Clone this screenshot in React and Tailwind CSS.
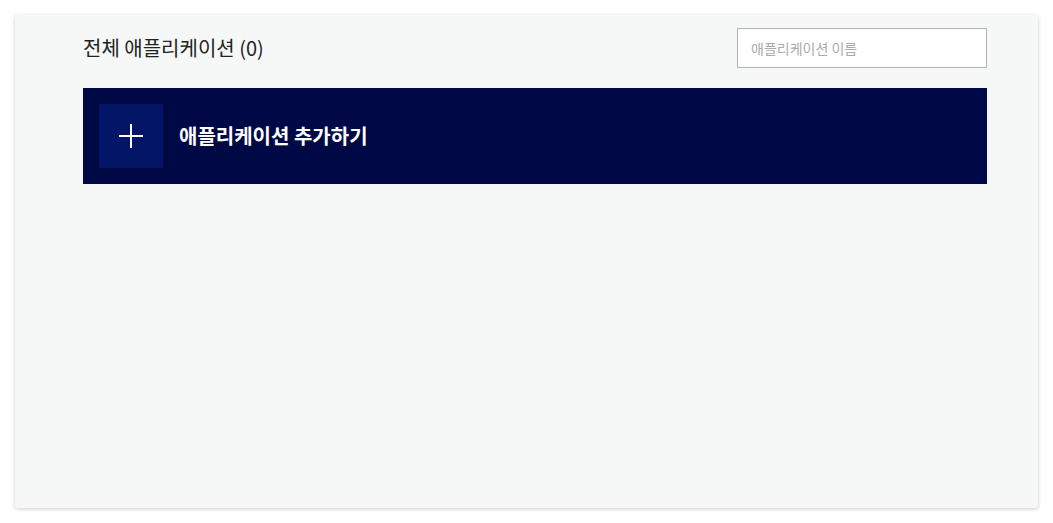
export default function App() {
  return (
    <div className="w-[1053px] h-[523px] bg-white pt-[15px] pl-[15px]" style={{ fontFamily: '"Noto Sans CJK KR", "Noto Sans", sans-serif' }}>
      <div className="w-[1023px] h-[493px] bg-[#f6f7f7] rounded-[3px] shadow-[0_1px_4px_rgba(0,0,0,0.2)] pl-[68px] pr-[51px] pt-[13px]">
        <div className="flex items-center justify-between h-[40px]">
          <h1 className="text-[20px] text-[#222] font-normal leading-none">전체 애플리케이션 (0)</h1>
          <input
            className="w-[250px] h-[40px] bg-white border border-[#b3b3b3] px-[13px] text-[14px] text-[#333] placeholder:text-[#aaa] outline-none"
            placeholder="애플리케이션 이름"
          />
        </div>
        <button className="mt-[20px] w-full h-[96px] bg-[#000845] flex items-center p-[16px] gap-[16px] text-left">
          <span className="w-[64px] h-[64px] bg-[#031566] flex items-center justify-center">
            <svg width="26" height="26" viewBox="0 0 26 26">
              <path d="M13 1v24M1 13h24" stroke="white" strokeWidth="2" />
            </svg>
          </span>
          <span className="text-white text-[20px] font-bold">애플리케이션 추가하기</span>
        </button>
      </div>
    </div>
  );
}
